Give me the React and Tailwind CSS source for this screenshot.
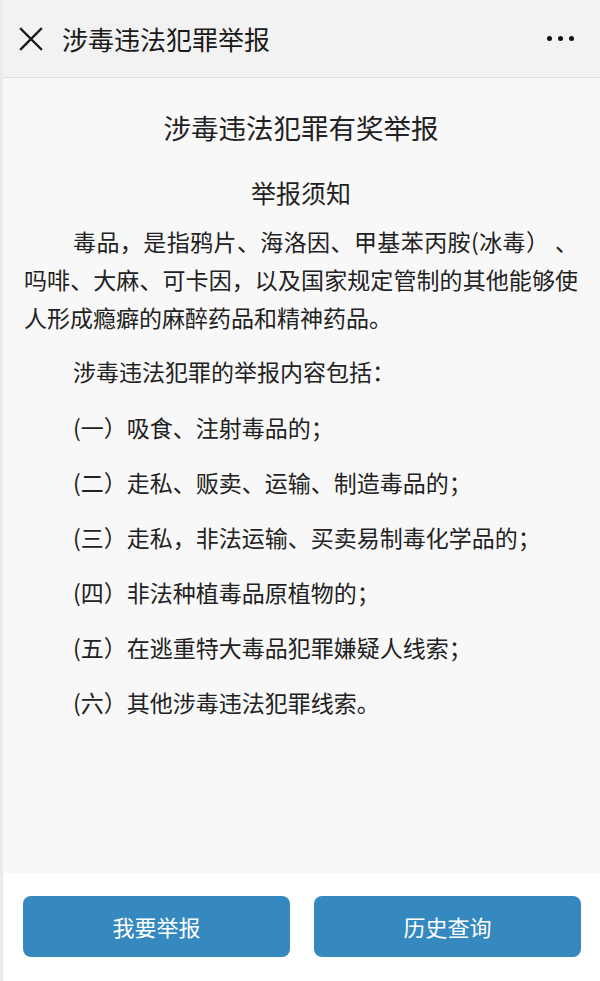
import React from "react";

const items = [
  "(一）吸食、注射毒品的；",
  "(二）走私、贩卖、运输、制造毒品的；",
  "(三）走私，非法运输、买卖易制毒化学品的；",
  "(四）非法种植毒品原植物的；",
  "(五）在逃重特大毒品犯罪嫌疑人线索；",
  "(六）其他涉毒违法犯罪线索。",
];

function CloseIcon() {
  return (
    <svg width="24" height="24" viewBox="0 0 24 24" className="shrink-0">
      <path d="M2 2 L22 22 M22 2 L2 22" stroke="#1a1a1a" strokeWidth="2.4" strokeLinecap="square" fill="none" />
    </svg>
  );
}

export default function App() {
  return (
    <div
      className="w-[600px] h-[981px] flex flex-col text-[#222] border-l-[3px] border-[#ececec]"
      style={{ fontFamily: '"Noto Sans CJK SC", "Noto Sans", sans-serif' }}
    >
      {/* header */}
      <div className="h-[78px] shrink-0 bg-[#f2f2f2] border-b border-[#dedede] flex items-center pl-[16px] pr-[26px]">
        <CloseIcon />
        <div className="ml-[19px] text-[26px] leading-none text-[#1a1a1a]">涉毒违法犯罪举报</div>
        <div className="ml-auto flex items-center gap-[6px]">
          <span className="w-[5px] h-[5px] rounded-full bg-[#111]"></span>
          <span className="w-[5px] h-[5px] rounded-full bg-[#111]"></span>
          <span className="w-[5px] h-[5px] rounded-full bg-[#111]"></span>
        </div>
      </div>

      {/* content */}
      <div className="flex-1 bg-[#f8f8f8] pl-[21px] pr-[22px] pt-[29px] text-[23px] leading-[38px]">
        <h1 className="text-center text-[27.5px] leading-[40px]">涉毒违法犯罪有奖举报</h1>
        <h2 className="text-center text-[25px] leading-[38px] mt-[26px]">举报须知</h2>
        <div className="mt-[11px] mb-[16px]">
          <p className="indent-[49px] [text-align-last:justify]">毒品，是指鸦片、海洛因、甲基苯丙胺(冰毒） 、</p>
          <p className="text-justify">吗啡、大麻、可卡因，以及国家规定管制的其他能够使人形成瘾癖的麻醉药品和精神药品。</p>
        </div>
        <p className="pl-[49px] mb-[18px]">涉毒违法犯罪的举报内容包括：</p>
        {items.map((t) => (
          <p key={t} className="pl-[49px] mb-[17px]">
            {t}
          </p>
        ))}
      </div>

      {/* footer buttons */}
      <div className="h-[108px] shrink-0 bg-white flex gap-[24px] pl-[20px] pr-[19px] pt-[23px]">
        <button className="flex-1 h-[61px] rounded-[8px] bg-[#3589bf] text-white text-[22px]">我要举报</button>
        <button className="flex-1 h-[61px] rounded-[8px] bg-[#3589bf] text-white text-[22px]">历史查询</button>
      </div>
    </div>
  );
}
